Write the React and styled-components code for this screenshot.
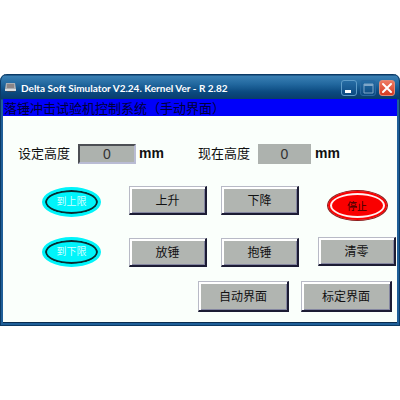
import React from "react";
import styled, { createGlobalStyle } from "styled-components";

const GlobalStyle = createGlobalStyle`
  *, *::before, *::after { box-sizing: border-box; }
  body {
    margin: 0;
    background: #fff;
    color: #111;
    font-family: "Liberation Sans", "Noto Sans CJK SC", sans-serif;
  }
`;

const Page = styled.div`
  padding: 74px 0;
`;

const Window = styled.main`
  display: flex;
  flex-direction: column;
  padding: 0 3px 3px;
  border-radius: 7px 7px 0 0;
  background: linear-gradient(#0b3a66 0, #0b3a66 1px, #3a80b4 2px, #22689f 10px, #0b4a80 18px, #083c6c 25px, #1f5f98 26px);
  box-shadow: inset 0 -1px #0c3a64, inset 1px 0 #0b3a66, inset -1px 0 #0b3a66;
`;

const TitleBar = styled.header`
  display: flex;
  align-items: center;
  gap: 5px;
  height: 25px;
  padding: 2px 2px 0 2px;
`;

const Title = styled.h1`
  flex: 1;
  margin: 0;
  color: #fff;
  font: 700 10px/14px Lato, sans-serif;
  white-space: nowrap;
`;

const WindowButtons = styled.div`
  display: flex;
  gap: 3px;
`;

const WindowButton = styled.button`
  display: flex;
  width: 16px;
  height: 16px;
  padding: 0;
  border: 1px solid ${(p) => (p.$close ? "#e08a78" : p.$dim ? "#2a68a0" : "#5f9cc8")};
  border-radius: 3px;
  background: ${(p) =>
    p.$close
      ? "linear-gradient(#ee7a62, #d63a22)"
      : "linear-gradient(#266ca4, #0c4a82)"};
  svg { display: block; width: 14px; height: 14px; }
`;

const Banner = styled.h2`
  margin: 0;
  padding-left: 1px;
  background: #0000fa;
  color: #000038;
  font: 400 13px/17px "Noto Sans CJK SC", sans-serif;
  white-space: nowrap;
`;

const Panel = styled.section`
  padding: 28px 1px 10px 15px;
  background: #fafffb;
  border: solid #082c50;
  border-width: 0 0 1px;
`;

const Readings = styled.div`
  display: flex;
  gap: 34px;
`;

const Reading = styled.div`
  display: flex;
  align-items: center;
  height: 20px;
  font-size: 13px;
  line-height: 20px;
  white-space: nowrap;
`;

const FieldInput = styled.input`
  width: 58px;
  height: 20px;
  margin: 0 3px 0 8px;
  padding: 0;
  border: 2px solid;
  border-color: #4c4f54 #b9bcd4 #b9bcd4 #4c4f54;
  border-radius: 0;
  background: #adb2ae;
  color: #333;
  font: 14px "Liberation Sans", sans-serif;
  text-align: center;
`;

const FieldOutput = styled.output`
  width: 53px;
  height: 20px;
  margin: 0 4px 0 8px;
  background: #adb2ae;
  color: #333;
  font-size: 14px;
  text-align: center;
`;

const Unit = styled.span`
  font-size: 14px;
  font-weight: 700;
  line-height: 18px;
  align-self: flex-start;
`;

const Controls = styled.div`
  display: flex;
  padding: 22px 0 14px 24px;
`;

const Lamps = styled.div`
  flex: 59;
  display: flex;
  flex-direction: column;
  gap: 20px;
  padding-top: 1px;
`;

const Ellipse = styled.div`
  display: flex;
  align-items: center;
  justify-content: center;
  height: 30px;
  padding: 0;
  border: 3px solid #00f4fa;
  border-radius: 50%;
  background: #00f4fa;
  box-shadow: inset 0 0 0 2px #082c30;
  color: #d0ffff;
  font-size: 10px;
  line-height: 14px;
`;

const StopButton = styled.button`
  width: 61px;
  height: 31px;
  padding: 0;
  border: 1px solid #8c2020;
  border-radius: 50%;
  background: #fa0000;
  box-shadow: inset 0 0 0 2px #fa0000, inset 0 0 0 4px #fff0f0;
  color: #300;
  font: 10px/14px "Noto Sans CJK SC", sans-serif;
`;

const Motions = styled.div`
  flex: 170;
  display: grid;
  grid-template-columns: 1fr 1fr;
  gap: 23px 14px;
  margin: 0 19px 0 28px;
`;

const PushButton = styled.button`
  height: ${(p) => (p.$tall ? "31px" : "29px")};
  padding: 0;
  border: solid;
  border-width: 1px 2px 2px 1px;
  border-color: #b8bac6 #1c1c34 #1c1c34 #b8bac6;
  border-radius: 0;
  box-shadow: inset 2px 2px #fff, inset -1px -1px #8486a0;
  background: #b1b5b1;
  color: #111;
  font: 12px/18px "Noto Sans CJK SC", sans-serif;
`;

const Side = styled.div`
  flex: 78;
  display: flex;
  flex-direction: column;
  align-items: center;
  gap: 16px;
  padding-top: 4px;
  ${PushButton} { align-self: stretch; }
`;

const Pages = styled.nav`
  display: grid;
  grid-template-columns: 1fr 1fr;
  gap: 12px;
  padding: 0 4px 0 180px;
`;

const AppIcon = () => (
  <svg width="11" height="9" viewBox="0 0 11 9" aria-hidden="true">
    <path d="M1 0h9l1 6H0z" fill="#a9aeb4" />
    <path d="M2 1h7v4H2z" fill="#8a8587" />
    <path d="M0 6h11v2H0z" fill="#d9dde0" />
    <path d="M2 8h8v1H2z" fill="#34465c" />
  </svg>
);

export default function App() {
  return (
    <Page>
      <GlobalStyle />
      <Window>
        <TitleBar>
          <AppIcon />
          <Title>Delta Soft Simulator V2.24. Kernel Ver - R 2.82</Title>
          <WindowButtons>
            <WindowButton type="button" aria-label="Minimize">
              <svg viewBox="0 0 14 14"><path d="M3 9h6v3H3z" fill="#fff" /></svg>
            </WindowButton>
            <WindowButton type="button" aria-label="Maximize" $dim>
              <svg viewBox="0 0 14 14">
                <path d="M3 3h9v9h-9z" fill="none" stroke="#7fa6c8" />
                <path d="M3 3h9v2H3z" fill="#7fa6c8" />
              </svg>
            </WindowButton>
            <WindowButton type="button" aria-label="Close" $close>
              <svg viewBox="0 0 14 14">
                <path d="M3 3l8 8M11 3l-8 8" stroke="#fff" strokeWidth="2" strokeLinecap="round" />
              </svg>
            </WindowButton>
          </WindowButtons>
        </TitleBar>
        <Banner>落锤冲击试验机控制系统（手动界面）</Banner>
        <Panel>
          <Readings>
            <Reading>
              <label htmlFor="target">设定高度</label>
              <FieldInput id="target" defaultValue="0" inputMode="numeric" />
              <Unit>mm</Unit>
            </Reading>
            <Reading>
              <label htmlFor="current">现在高度</label>
              <FieldOutput id="current">0</FieldOutput>
              <Unit>mm</Unit>
            </Reading>
          </Readings>
          <Controls>
            <Lamps>
              <Ellipse>到上限</Ellipse>
              <Ellipse>到下限</Ellipse>
            </Lamps>
            <Motions>
              <PushButton type="button">上升</PushButton>
              <PushButton type="button">下降</PushButton>
              <PushButton type="button">放锤</PushButton>
              <PushButton type="button">抱锤</PushButton>
            </Motions>
            <Side>
              <StopButton type="button">停止</StopButton>
              <PushButton type="button">清零</PushButton>
            </Side>
          </Controls>
          <Pages>
            <PushButton type="button" $tall>自动界面</PushButton>
            <PushButton type="button" $tall>标定界面</PushButton>
          </Pages>
        </Panel>
      </Window>
    </Page>
  );
}
